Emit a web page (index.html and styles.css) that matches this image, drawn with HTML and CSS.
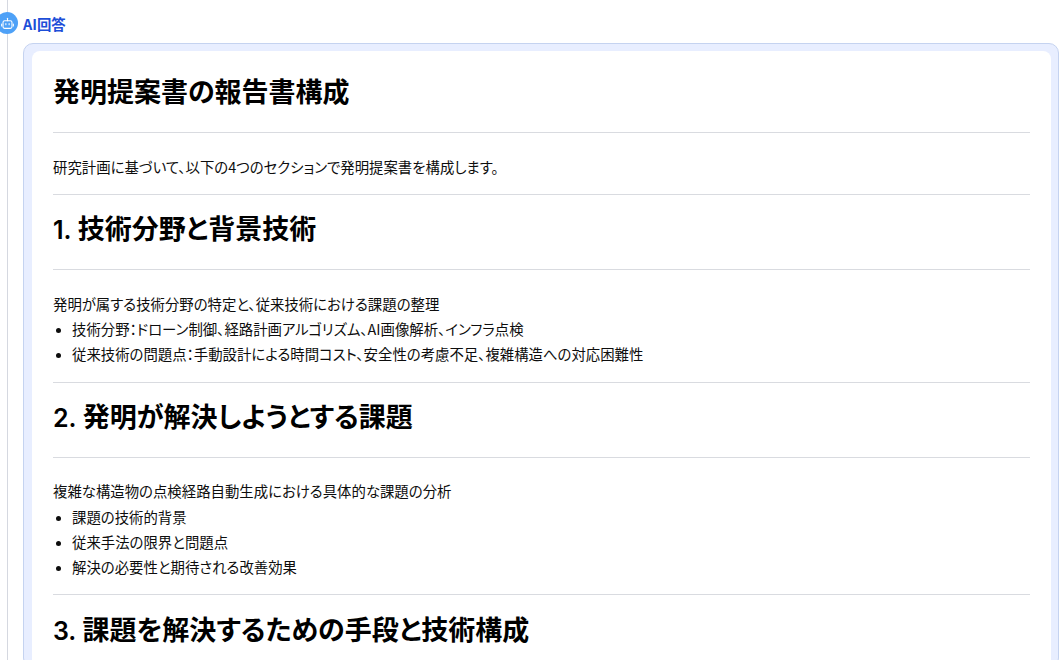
FILE: index.html
```
<!DOCTYPE html>
<html lang="ja">
<head>
<meta charset="utf-8">
<title>AI回答</title>
<link rel="stylesheet" href="styles.css">
</head>
<body>
<div class="timeline"></div>
<div class="avatar">
<svg viewBox="0 0 16 16" width="13" height="13" fill="none" stroke="#fff" stroke-width="1.3" stroke-linecap="round" stroke-linejoin="round"><path d="M8 1.5v3"/><rect x="2.5" y="4.5" width="11" height="9.5" rx="2"/><path d="M.8 8.5v2.5M15.2 8.5v2.5M6 8v1.4M10 8v1.4"/></svg>
</div>
<main class="entry">
<header class="label">AI回答</header>
<section class="card">
<article class="doc">
<h1>発明提案書の報告書構成</h1>
<hr class="rule-title">
<p>研究計画に基づいて、以下の4つのセクションで発明提案書を構成します。</p>
<hr class="rule-section">
<h2><span class="num">1.</span> 技術分野と背景技術</h2>
<hr class="rule-title">
<p>発明が属する技術分野の特定と、従来技術における課題の整理</p>
<ul>
<li>技術分野：ドローン制御、経路計画アルゴリズム、AI画像解析、インフラ点検</li>
<li>従来技術の問題点：手動設計による時間コスト、安全性の考慮不足、複雑構造への対応困難性</li>
</ul>
<hr class="rule-section">
<h2><span class="num">2.</span> 発明が解決しようとする課題</h2>
<hr class="rule-title">
<p>複雑な構造物の点検経路自動生成における具体的な課題の分析</p>
<ul>
<li>課題の技術的背景</li>
<li>従来手法の限界と問題点</li>
<li>解決の必要性と期待される改善効果</li>
</ul>
<hr class="rule-section">
<h2><span class="num">3.</span> 課題を解決するための手段と技術構成</h2>
</article>
</section>
</main>
</body>
</html>
```
FILE: styles.css
```
* { box-sizing: border-box; }
html, body { margin: 0; height: 660px; overflow: hidden; background: #fff; }
body {
  position: relative;
  font-family: "Noto Sans CJK JP", "Noto Sans", sans-serif;
  font-feature-settings: "palt";
  color: #0d0d0d;
}
.timeline {
  position: absolute; left: 7px; top: 0; bottom: 0; width: 1px; background: #d5d8e0;
}
.avatar {
  position: absolute; left: -4px; top: 12px; width: 22px; height: 22px; border-radius: 50%;
  background: #4ea1f7; display: flex; align-items: center; justify-content: center;
}
.entry { padding: 14px 5px 0 23px; }
.label { font-size: 14.4px; line-height: 20px; font-weight: 700; color: #1d4ed8; margin-bottom: 9px; }
.card {
  border: 1px solid #c5d3f0; border-radius: 10px; background: #e8eeff; padding: 7px 7px 0 8px;
}
.doc { background: #fff; border-radius: 8px; padding: 19px 21px 20px 21px; }
h1 { margin: 0; font-size: 27px; line-height: 42px; font-weight: 700; color: #000; }
h2 { margin: 0; font-size: 27px; line-height: 36px; font-weight: 700; color: #000; }
.num { font-family: "Inter", sans-serif; font-weight: 600; font-size: 25px; line-height: 0; }
p { margin: 0; font-size: 14.4px; line-height: 25.2px; }
hr { border: 0; height: 1px; background: #d9dbe0; margin: 0; }
.rule-title { margin: 20px 0 20.6px; }
h2 + .rule-title { margin-top: 23px; }
.rule-section { margin: 15.2px 0 15.2px; }
ul { margin: 0; padding: 0 0 0 19px; font-size: 14.4px; line-height: 25.2px; }
li { margin: 0; }
li::marker { font-size: 12px; }
```
